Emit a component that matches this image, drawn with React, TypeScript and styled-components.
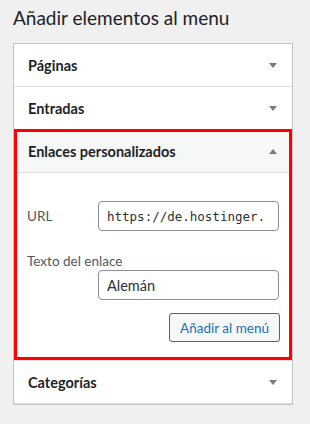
import React from "react";
import styled, { createGlobalStyle } from "styled-components";

const GlobalStyle = createGlobalStyle`
  html, body {
    margin: 0;
    padding: 0;
    background: #f0f0f1;
  }
  body {
    font-family: Lato, "Noto Sans", sans-serif;
    color: #1d2327;
  }
`;

const Page = styled.div`
  width: 310px;
  height: 424px;
  box-sizing: border-box;
  padding: 0 17px 0 13px;
`;

const Title = styled.h2`
  margin: 0;
  padding-top: 6px;
  height: 36px;
  box-sizing: border-box;
  font-size: 19px;
  font-weight: 400;
  line-height: 24px;
  color: #1d2327;
`;

const Panel = styled.div`
  margin-top: 7px;
  background: #fff;
  border: 1px solid #c3c4c7;
`;

const Arrow = styled.span<{ $up?: boolean }>`
  width: 0;
  height: 0;
  margin-right: 1px;
  border-left: 4px solid transparent;
  border-right: 4px solid transparent;
  ${(p) =>
    p.$up
      ? "border-bottom: 5px solid #787c82;"
      : "border-top: 5px solid #787c82;"}
`;

const RowHeader = styled.div<{ $open?: boolean }>`
  display: flex;
  align-items: center;
  justify-content: space-between;
  height: 42px;
  padding: 0 14px;
  background: ${(p) => (p.$open ? "#f6f7f7" : "#fff")};
  border-bottom: 1px solid #dcdcde;
  font-size: 14.5px;
  font-weight: 700;
  color: #1d2327;
`;

const Section = styled.div`
  position: relative;
  border-bottom: 1px solid #dcdcde;

  &::after {
    content: "";
    position: absolute;
    inset: -1px 0 0 0;
    border: 3px solid #ff0000;
    pointer-events: none;
  }
`;

const Body = styled.div`
  padding: 28px 13px 18px 13px;
  display: flex;
  flex-direction: column;
`;

const FieldRow = styled.div`
  display: flex;
  align-items: center;
  justify-content: space-between;
`;

const FieldStack = styled.div`
  display: flex;
  flex-direction: column;
  margin-top: 21px;
`;

const Label = styled.label`
  font-size: 13.5px;
  color: #50575e;
  line-height: 18px;
`;

const Input = styled.input<{ $mono?: boolean }>`
  width: 181px;
  height: 30px;
  box-sizing: border-box;
  border: 1px solid #8c8f94;
  border-radius: 4px;
  padding: 0 8px;
  background: #fff;
  color: #2c3338;
  font-family: ${(p) =>
    p.$mono ? '"DejaVu Sans Mono", "Liberation Mono", monospace' : 'Lato, "Noto Sans", sans-serif'};
  font-size: ${(p) => (p.$mono ? "12.5px" : "14.5px")};
  outline: none;
`;

const InputWrap = styled.div`
  display: flex;
  justify-content: flex-end;
`;

const Actions = styled.div`
  display: flex;
  justify-content: flex-end;
  margin-top: 13px;
  margin-right: -1px;
`;

const Button = styled.button`
  height: 29px;
  padding: 0 10px;
  border: 1px solid #2271b1;
  border-radius: 3px;
  background: #f6f7f7;
  color: #2271b1;
  font-family: Lato, "Noto Sans", sans-serif;
  font-size: 13.5px;
`;

const Row = ({ title }: { title: string }) => (
  <RowHeader>
    <span>{title}</span>
    <Arrow />
  </RowHeader>
);

export default function App() {
  return (
    <Page>
      <GlobalStyle />
      <Title>Añadir elementos al menu</Title>
      <Panel>
        <Row title="Páginas" />
        <Row title="Entradas" />
        <Section>
          <RowHeader $open>
            <span>Enlaces personalizados</span>
            <Arrow $up />
          </RowHeader>
          <Body>
            <FieldRow>
              <Label>URL</Label>
              <Input $mono defaultValue="https://de.hostinger." />
            </FieldRow>
            <FieldStack>
              <Label>Texto del enlace</Label>
              <InputWrap>
                <Input defaultValue="Alemán" />
              </InputWrap>
            </FieldStack>
            <Actions>
              <Button>Añadir al menú</Button>
            </Actions>
          </Body>
        </Section>
        <RowHeader>
          <span>Categorías</span>
          <Arrow />
        </RowHeader>
      </Panel>
    </Page>
  );
}
